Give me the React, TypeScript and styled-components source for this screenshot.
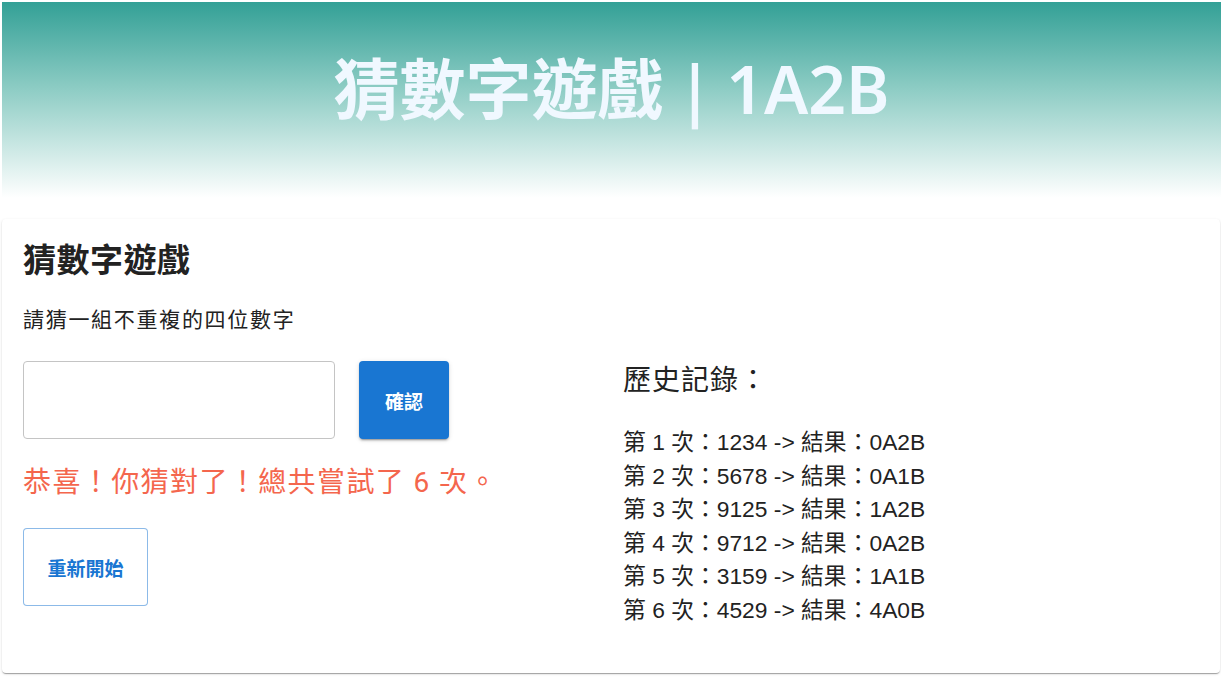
import styled, { createGlobalStyle } from 'styled-components'

const GlobalStyle = createGlobalStyle`
  body {
    margin: 0;
    background: #ffffff;
    font-family: Roboto, "Noto Sans CJK TC", sans-serif;
  }
`

interface Guess {
  value: string,
  result: string
}

const history: Guess[] = [
  { value: '1234', result: '0A2B' },
  { value: '5678', result: '0A1B' },
  { value: '9125', result: '1A2B' },
  { value: '9712', result: '0A2B' },
  { value: '3159', result: '1A1B' },
  { value: '4529', result: '4A0B' },
]

const App = () => {
  return (
    <Page>
      <GlobalStyle />
      <Header>
        <h1 className="header_title">猜數字遊戲 | 1A2B</h1>
      </Header>
      <Card>
        <h2 className="card_title">猜數字遊戲</h2>
        <p className="card_hint">請猜一組不重複的四位數字</p>
        <Columns>
          <div>
            <InputRow>
              <GuessInput type="text" />
              <Button variant="contained">確認</Button>
            </InputRow>
            <Message>恭喜！你猜對了！總共嘗試了 6 次。</Message>
            <Button variant="outlined">重新開始</Button>
          </div>
          <History>
            <h3 className="history_title">歷史記錄：</h3>
            <ul className="history_list">
              {history.map((item, i) => (
                <li key={i}>第 {i + 1} 次：{item.value} -&gt; 結果：{item.result}</li>
              ))}
            </ul>
          </History>
        </Columns>
      </Card>
    </Page>
  )
}

const Page = styled.div`
  padding: 2px 1px 8px 2px;
`

const Header = styled.header`
  height: 196px;
  margin-right: -1px;
  display: flex;
  align-items: center;
  justify-content: center;
  background: linear-gradient(to bottom, #33a096 0%, #8fcdc5 45%, #ffffff 100%);

  .header_title {
    margin: 0 0 23px;
    font-family: "Noto Sans", "Noto Sans CJK TC", sans-serif;
    font-size: 66px;
    font-weight: 600;
    line-height: 1.2;
    color: #f0f8ff;
    word-spacing: -4px;
  }
`

const Card = styled.section`
  margin-top: 21px;
  padding: 22px 21px 45px;
  background: #ffffff;
  border-radius: 4px;
  box-shadow: 0px 2px 1px -1px rgba(0,0,0,0.2), 0px 1px 1px 0px rgba(0,0,0,0.14), 0px 1px 3px 0px rgba(0,0,0,0.12);

  .card_title {
    margin: 0;
    font-size: 33px;
    font-weight: 700;
    line-height: 40px;
    color: #222222;
    letter-spacing: 0.5px;
  }

  .card_hint {
    margin: 24px 0 0;
    font-size: 21px;
    line-height: 30px;
    color: #222222;
    letter-spacing: 1.7px;
  }
`

const Columns = styled.div`
  margin-top: 26px;
  display: grid;
  grid-template-columns: 1fr 1fr;
  column-gap: 24px;
`

const InputRow = styled.div`
  display: flex;
  gap: 24px;
`

const GuessInput = styled.input`
  width: 312px;
  height: 78px;
  box-sizing: border-box;
  border: 1px solid #c4c4c4;
  border-radius: 4px;
  font-size: 20px;
  padding: 0 14px;
  outline: none;
`

const Button = styled.button<{ variant: 'contained' | 'outlined' }>`
  height: 78px;
  padding: 0 22px;
  box-sizing: border-box;
  border-radius: 4px;
  font-family: Roboto, "Noto Sans CJK TC", sans-serif;
  font-size: 19px;
  font-weight: 600;
  cursor: pointer;
  color: ${p => p.variant === 'contained' ? '#ffffff' : '#1976d2'};
  background: ${p => p.variant === 'contained' ? '#1976d2' : '#ffffff'};
  border: ${p => p.variant === 'contained' ? 'none' : '1px solid rgba(25,118,210,0.5)'};
  box-shadow: ${p => p.variant === 'contained'
    ? '0px 3px 1px -2px rgba(0,0,0,0.2), 0px 2px 2px 0px rgba(0,0,0,0.14), 0px 1px 5px 0px rgba(0,0,0,0.12)'
    : 'none'};
  width: ${p => p.variant === 'contained' ? '90px' : '125px'};
`

const Message = styled.p`
  margin: 27px 0 28px;
  font-size: 28px;
  line-height: 34px;
  color: #f4664d;
  letter-spacing: 1.4px;
`

const History = styled.div`
  color: #222222;

  .history_title {
    margin: 0;
    font-size: 28px;
    font-weight: 400;
    line-height: 40px;
    letter-spacing: 1px;
  }

  .history_list {
    list-style: none;
    margin: 25px 0 0;
    padding: 0;
    font-family: "Liberation Sans", "Noto Sans CJK TC", sans-serif;
    font-size: 22.8px;
    line-height: 33.6px;
  }
`

export default App
